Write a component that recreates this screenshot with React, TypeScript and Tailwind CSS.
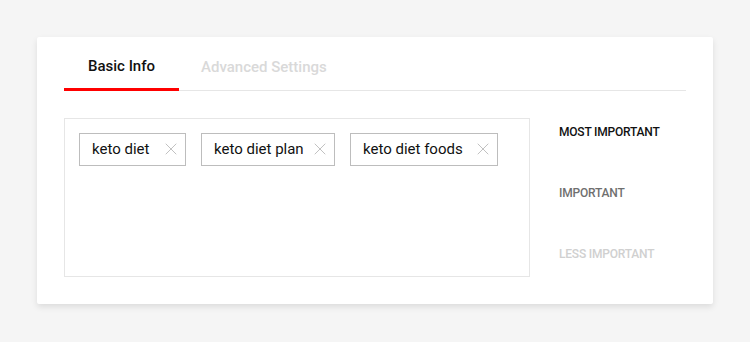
import { X } from "lucide-react";

const keywords = [
  { label: "keto diet", w: "w-[107px]" },
  { label: "keto diet plan", w: "w-[134px]" },
  { label: "keto diet foods", w: "w-[148px]" },
];

function Chip({ label, w }: { label: string; w: string }) {
  return (
    <div className={`flex h-[33px] items-center justify-between border border-[#bdbdbd] pl-[12px] pr-[4px] text-[15px] text-[#111] ${w}`}>
      <span>{label}</span>
      <X className="text-[#b5b5b5]" size={20} strokeWidth={1} />
    </div>
  );
}

export default function App() {
  return (
    <div className="min-h-[342px] bg-[#f5f5f5] px-[37px] pt-[37px] font-['Roboto',sans-serif]">
      <div className="h-[267px] w-[676px] rounded-[2px] bg-white px-[27px] shadow-[0_3px_6px_rgba(0,0,0,.1)]">
        <div className="flex border-b border-[#e6e6e6]">
          <button className="-mb-px w-[115px] border-b-[3px] border-[#ff0000] pb-[10px] pt-[18px] text-center text-[15px] font-medium text-[#111]">
            Basic Info
          </button>
          <button className="px-[22px] pb-[10px] pt-[18px] text-[15px] font-medium text-[#d9d9d9]">
            Advanced Settings
          </button>
        </div>
        <div className="mt-[27px] flex">
          <div className="flex h-[159px] w-[466px] flex-wrap content-start gap-[15px] border border-[#e6e6e6] p-[14px]">
            {keywords.map((k) => (
              <Chip key={k.label} label={k.label} w={k.w} />
            ))}
          </div>
          <div className="ml-[29px] flex flex-col gap-[46px] pt-[7px] text-[12px] font-medium leading-[15px] tracking-[-0.2px]">
            <span className="text-[#111]">MOST IMPORTANT</span>
            <span className="text-[#6f6f6f]">IMPORTANT</span>
            <span className="text-[#d0d0d0]">LESS IMPORTANT</span>
          </div>
        </div>
      </div>
    </div>
  );
}
